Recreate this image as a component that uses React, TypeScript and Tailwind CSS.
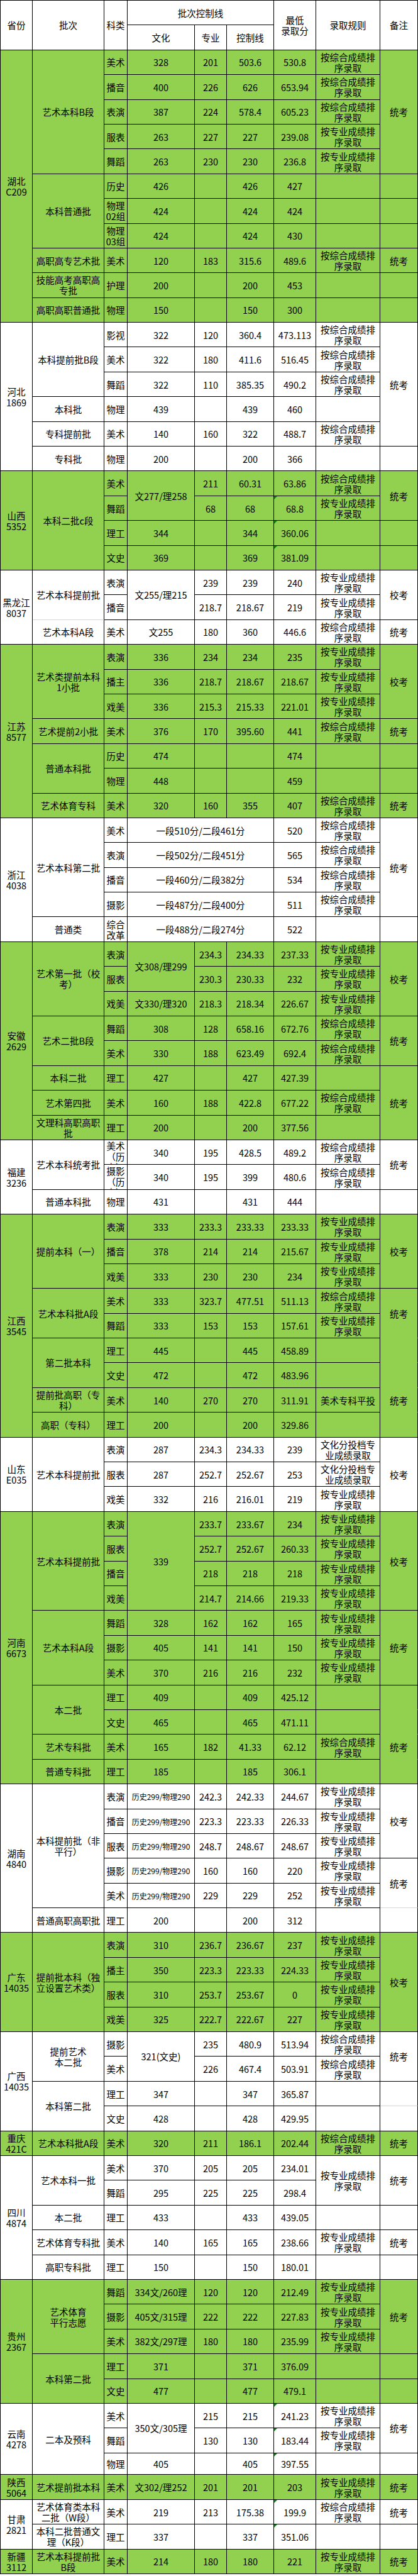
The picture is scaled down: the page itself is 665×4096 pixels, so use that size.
import React from "react";

type Cell = string | [string, number?, number?, string?];
type Group = { g: boolean; rows: Cell[][]; shortLast?: boolean };

const G1 = "按综合成绩排\n序录取";
const G2 = "按专业成绩排\n序录取";
const HS = "历史299/物理290";
const WH = "文化分投档专\n业成绩录取";

const groups: Group[] = [
  {
    g: true,
    rows: [
      [["湖北\nC209", 11], ["艺术本科B段", 5], "美术", "328", "201", "503.6", "530.8", G1, ["统考", 5]],
      ["播音", "400", "226", "626", "653.94", G1],
      ["表演", "387", "224", "578.4", "605.23", G1],
      ["服表", "263", "227", "227", "239.08", G2],
      ["舞蹈", "263", "230", "230", "236.8", G2],
      [["本科普通批", 3], "历史", "426", "", "426", "427", "", ""],
      ["物理\n02组", "424", "", "424", "424", "", ""],
      ["物理\n03组", "424", "", "424", "430", "", ""],
      ["高职高专艺术批", "美术", "120", "183", "315.6", "489.6", G1, "统考"],
      ["技能高考高职高\n专批", "护理", "200", "", "200", "453", "", ""],
      ["高职高职普通批", "物理", "150", "", "150", "300", "", ""],
    ],
  },
  {
    g: false,
    rows: [
      [["河北\n1869", 6], ["本科提前批B段", 3], "影视", "322", "120", "360.4", "473.113", G1, ["统考", 5]],
      ["美术", "322", "180", "411.6", "516.45", G1],
      ["舞蹈", "322", "110", "385.35", "490.2", G1],
      ["本科批", "物理", "439", "", "439", "460", ""],
      ["专科提前批", "美术", "140", "160", "322", "488.7", G1],
      ["专科批", "物理", "200", "", "200", "366", "", ""],
    ],
  },
  {
    g: true,
    rows: [
      [["山西\n5352", 4], ["本科二批c段", 4], "美术", ["文277/理258", 2], "211", "60.31", "63.86", G1, ["统考", 2]],
      ["舞蹈", "68", "68", ["68.8", 1, 1, "t"], G2],
      ["理工", "344", "", "344", ["360.06", 1, 1, "t"], "", ""],
      ["文史", "369", "", "369", ["381.09", 1, 1, "t"], "", ""],
    ],
  },
  {
    g: false,
    rows: [
      [["黑龙江\n8037", 3], ["艺术本科提前批", 2, 1, "g"], "表演", ["文255/理215", 2], "239", "239", "240", G2, ["校考", 2]],
      ["播音", "218.7", "218.67", "219", G2],
      ["艺术本科A段", "美术", "文255", "180", "360", "446.6", G1, "统考"],
    ],
  },
  {
    g: true,
    rows: [
      [["江苏\n8577", 7], ["艺术类提前本科\n1小批", 3], "表演", "336", "234", "234", "235", G2, ["校考", 3]],
      ["播主", "336", "218.7", "218.67", "218.67", G2],
      ["戏美", "336", "215.3", "215.33", "221.01", G2],
      ["艺术提前2小批", "美术", "376", "170", "395.60", "441", G1, "统考"],
      [["普通本科批", 2], "历史", "474", "", "", "474", "", ""],
      ["物理", "448", "", "", "459", "", ""],
      ["艺术体育专科", "美术", "320", "160", "355", "407", G1, "统考"],
    ],
  },
  {
    g: false,
    rows: [
      [["浙江\n4038", 5], ["艺术本科第二批", 4], "美术", ["一段510分/二段461分", 1, 3], "520", G1, ["统考", 4]],
      ["表演", ["一段502分/二段451分", 1, 3], "565", G1],
      ["播音", ["一段460分/二段382分", 1, 3], "534", G1],
      ["摄影", ["一段487分/二段400分", 1, 3], "511", G1],
      ["普通类", "综合\n改革", ["一段488分/二段274分", 1, 3], "522", "", ""],
    ],
  },
  {
    g: true,
    rows: [
      [["安徽\n2629", 8], ["艺术第一批（校\n考）", 3], "表演", ["文308/理299", 2], "234.3", "234.33", "237.33", G2, ["校考", 3]],
      ["服表", "230.3", "230.33", "232", G2],
      ["戏美", "文330/理320", "218.3", "218.34", "226.67", G2],
      [["艺术二批B段", 2], "舞蹈", "308", "128", "658.16", "672.76", G1, ["统考", 2]],
      ["美术", "330", "188", "623.49", "692.4", G1],
      ["本科二批", "理工", "427", "", "427", "427.39", "", ["统考", 3]],
      ["艺术第四批", "美术", "160", "188", "422.8", "677.22", G1],
      ["文理科高职高职\n批", "理工", "200", "", "200", "377.56", ""],
    ],
  },
  {
    g: false,
    rows: [
      [["福建\n3236", 3], ["艺术本科统考批", 2], ["美术\n（历\n史）", 1, 1, "c"], "340", "195", "428.5", "489.2", G1, ["统考", 2]],
      [["摄影\n（历\n史）", 1, 1, "c"], "340", "195", "399", "480.6", G1],
      ["普通本科批", "物理", "431", "", "431", "444", "", ""],
    ],
  },
  {
    g: true,
    rows: [
      [["江西\n3545", 9], ["提前本科（一）", 3], "表演", "333", "233.3", "233.33", "233.33", G2, ["校考", 3]],
      ["播音", "378", "214", "214", "215.67", G2],
      ["戏美", "333", "230", "230", "234", G2],
      [["艺术本科批A段", 2], "美术", "333", "323.7", "477.51", "511.13", G1, ["统考", 2, 1, "h"]],
      ["舞蹈", "333", "153", "153", "157.61", G2],
      [["第二批本科", 2], "理工", "445", "", "445", "458.89", "", ["", 1, 1, "h"]],
      ["文史", "472", "", "472", "483.96", "", ["", 1, 1, "h"]],
      ["提前批高职（专\n科）", "美术", "140", "270", "270", "311.91", "美术专科平投", ["统考", 1, 1, "h"]],
      ["高职（专科）", "理工", "200", "", "200", "329.86", "", ""],
    ],
  },
  {
    g: false,
    rows: [
      [["山东\nE035", 3], ["艺术本科提前批", 3], "表演", "287", "234.3", "234.33", "239", WH, ["校考", 3]],
      ["服表", "287", "252.7", "252.67", "253", WH],
      ["戏美", "332", "216", "216.01", "219", G2],
    ],
  },
  {
    g: true,
    rows: [
      [["河南\n6673", 11], ["艺术本科提前批", 4], "表演", ["339", 4], "233.7", "233.67", "234", G2, ["校考", 4]],
      ["服表", "252.7", "252.67", "260.33", G2],
      ["播音", "218", "218", "218", G2],
      ["戏美", "214.7", "214.66", "219.33", G2],
      [["艺术本科A段", 3], "舞蹈", "328", "162", "162", "165", G2, ["统考", 3]],
      ["摄影", "405", "141", "141", "150", G2],
      ["美术", "370", "216", "216", "232", G2],
      [["本二批", 2], "理工", "409", "", "409", "425.12", "", ["", 1, 1, "h"]],
      ["文史", "465", "", "465", "471.11", "", ["", 1, 1, "h"]],
      ["艺术专科批", "美术", "165", "182", "41.33", "62.12", G1, ["统考", 1, 1, "h"]],
      ["普通专科批", "理工", "185", "", "185", "306.1", "", ""],
    ],
  },
  {
    g: false,
    rows: [
      [["湖南\n4840", 6], ["本科提前批（非\n平行）", 5], "表演", [HS, 1, 1, "s"], "242.3", "242.33", "244.67", G2, ["校考", 3]],
      ["播音", [HS, 1, 1, "s"], "223.3", "223.33", "226.33", G2],
      ["服表", [HS, 1, 1, "s"], "248.7", "248.67", "248.67", G2],
      ["摄影", [HS, 1, 1, "s"], "160", "160", "220", G2, ["统考", 2, 1, "g"]],
      ["美术", [HS, 1, 1, "s"], "229", "229", "252", G2],
      ["普通高职高职批", "理工", "200", "", "200", "312", "", ""],
    ],
  },
  {
    g: true,
    rows: [
      [["广东\n14035", 4], ["提前批本科（独\n立设置艺术类）", 4], "表演", "310", "236.7", "236.67", "237", G2, ["校考", 4]],
      ["播主", "350", "223.3", "223.33", "224.33", G2],
      ["服表", "310", "253.7", "253.67", "0", G2],
      ["戏美", "325", "222.7", "222.67", "227", G2],
    ],
  },
  {
    g: false,
    rows: [
      [["广西\n14035", 4], ["提前艺术\n本二批", 2], "摄影", ["321(文史)", 2], "235", "480.9", "513.94", G1, ["统考", 2]],
      ["美术", "226", "467.4", "503.91", G1],
      [["本科第二批", 2], "理工", "347", "", "347", "365.87", "", ["", 1, 1, "g"]],
      ["文史", "428", "", "428", "429.95", "", ""],
    ],
  },
  {
    g: true,
    rows: [["重庆\n421C", "艺术本科批A段", "美术", "320", "211", "186.1", "202.44", G1, "统考"]],
  },
  {
    g: false,
    rows: [
      [["四川\n4874", 5], ["艺术本科一批", 2], "美术", "370", "205", "205", "234.01", [G2, 2], ["统考", 2]],
      ["舞蹈", "295", "225", "225", "298.4"],
      ["本二批", "理工", "433", "", "433", "439.05", "", ""],
      ["艺术体育专科批", "美术", "140", "165", "165", "238.66", G2, "统考"],
      ["高职专科批", "理工", "150", "", "150", "180.01", "", ""],
    ],
  },
  {
    g: true,
    rows: [
      [["贵州\n2367", 5], ["艺术体育\n平行志愿", 3], "舞蹈", "334文/260理", "120", "120", "212.49", G2, ["统考", 3]],
      ["摄影", "405文/315理", "222", "222", "227.83", G2],
      ["美术", "382文/297理", "180", "180", "235.99", G2],
      [["本科第二批", 2], "理工", "371", "", "371", "376.09", "", ""],
      ["文史", "477", "", "477", "479.1", "", ""],
    ],
  },
  {
    g: false,
    shortLast: true,
    rows: [
      [["云南\n4278", 3], ["二本及预科", 3], "美术", ["350文/305理", 2], "215", "215", ["241.23", 1, 1, "t"], G2, ["统考", 2]],
      ["舞蹈", "130", "130", ["183.44", 1, 1, "t"], G2],
      ["物理", "405", "", "405", ["397.55", 1, 1, "t"], "", ""],
    ],
  },
  {
    g: true,
    rows: [["陕西\n5064", "艺术提前批本科", "美术", "文302/理252", "201", "201", "203", G2, "统考"]],
  },
  {
    g: false,
    rows: [
      [["甘肃\n2821", 2], "艺术体育类本科\n二批（W段）", "美术", "219", "213", "175.38", ["199.9", 1, 1, "t"], G1, "统考"],
      ["本科二批普通文\n理（K段）", "理工", "337", "", "337", ["351.06", 1, 1, "t"], "", ""],
    ],
  },
  {
    g: true,
    rows: [["新疆\n3112", "艺术本科提前批\nB段", "美术", "214", "180", "180", "221", G2, "统考"]],
  },
];

function renderCell(cell: Cell, key: number, green: boolean) {
  const arr = typeof cell === "string" ? [cell] : cell;
  const text = arr[0] as string;
  const rs = (arr[1] as number | undefined) ?? 1;
  const cs = (arr[2] as number | undefined) ?? 1;
  const f = (arr[3] as string | undefined) ?? "";
  const bg = green ? "bg-[#92d050]" : "bg-white";
  const bb = f.includes("h")
    ? "border-b-transparent"
    : f.includes("g")
    ? "border-b-[#d4d4d4]"
    : "border-b-black";
  return (
    <td
      key={key}
      rowSpan={rs}
      colSpan={cs}
      className={`relative p-0 px-[2px] align-middle text-center border-r border-b border-r-black ${bb} ${bg}`}
    >
      {f.includes("t") && (
        <span className="absolute left-0 top-0 h-0 w-0 border-t-[5px] border-r-[5px] border-t-[#13801a] border-r-transparent" />
      )}
      {f.includes("c") ? (
        <div className="h-[38px] overflow-hidden whitespace-pre-line">{text}</div>
      ) : (
        <span className={`whitespace-pre-line ${f.includes("s") ? "text-[12px]" : ""}`}>{text}</span>
      )}
    </td>
  );
}

const th = "p-0 px-[2px] align-middle text-center font-normal border-r border-b border-black bg-white";

export default function App() {
  const rows: { cells: Cell[]; green: boolean; short: boolean }[] = [];
  groups.forEach((gr) => {
    gr.rows.forEach((r, i) => {
      rows.push({ cells: r, green: gr.g, short: !!gr.shortLast && i === gr.rows.length - 1 });
    });
  });
  return (
    <div className="w-[665px] bg-white font-['Noto_Sans_CJK_SC',sans-serif] text-black">
      <table className="w-[665px] table-fixed border-separate border-spacing-0 border-t border-l border-black text-[14.5px] leading-[17px]">
        <colgroup>
          <col className="w-[51px]" />
          <col className="w-[114px]" />
          <col className="w-[37px]" />
          <col className="w-[107px]" />
          <col className="w-[51px]" />
          <col className="w-[75px]" />
          <col className="w-[67px]" />
          <col className="w-[102px]" />
          <col className="w-[60px]" />
        </colgroup>
        <thead>
          <tr className="h-[39.4px]">
            <th rowSpan={2} className={th}>省份</th>
            <th rowSpan={2} className={th}>批次</th>
            <th rowSpan={2} className={th}>科类</th>
            <th colSpan={3} className={th}>批次控制线</th>
            <th rowSpan={2} className={`${th} whitespace-pre-line`}>{"最低\n录取分"}</th>
            <th rowSpan={2} className={th}>录取规则</th>
            <th rowSpan={2} className={th}>备注</th>
          </tr>
          <tr className="h-[39.4px]">
            <th className={th}>文化</th>
            <th className={th}>专业</th>
            <th className={th}>控制线</th>
          </tr>
        </thead>
        <tbody>
          {rows.map((r, i) => (
            <tr key={i} className={r.short ? "h-[34.8px]" : "h-[39.4px]"}>
              {r.cells.map((c, j) => renderCell(c, j, r.green))}
            </tr>
          ))}
        </tbody>
      </table>
    </div>
  );
}
